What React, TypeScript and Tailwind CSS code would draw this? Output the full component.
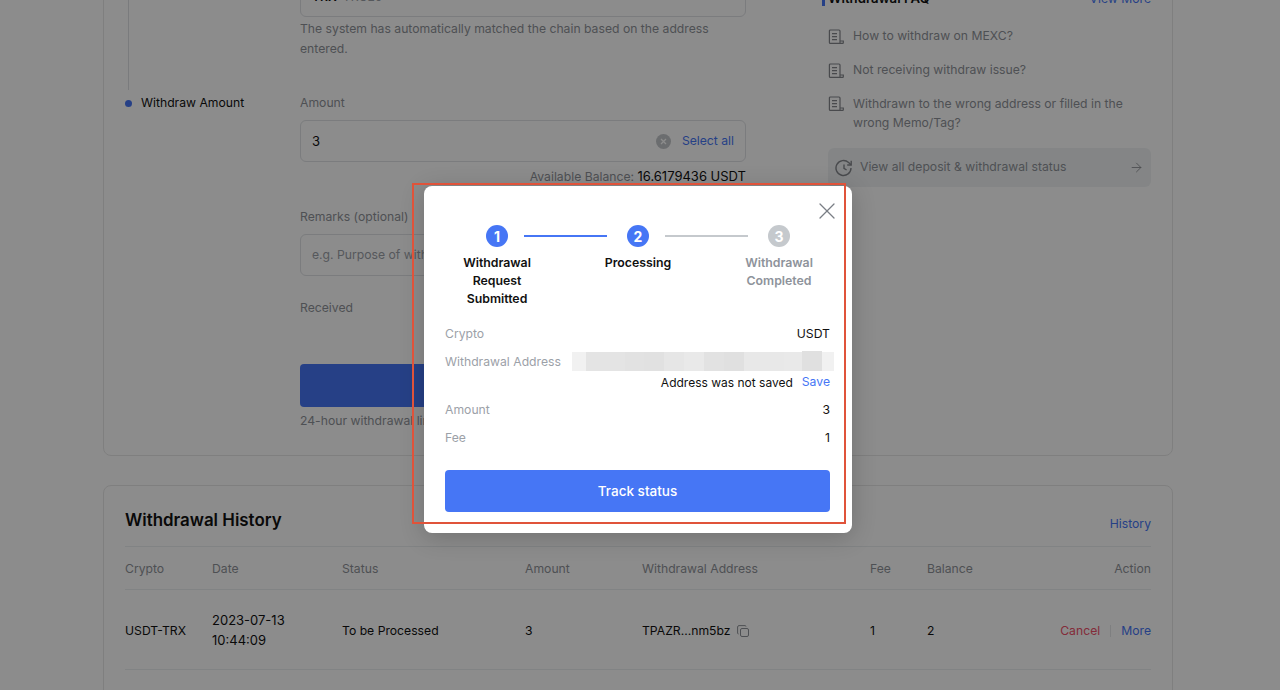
import { X, ArrowRight } from "lucide-react";

const font = { fontFamily: "Inter, 'Liberation Sans', sans-serif" };

function DocIcon() {
  return (
    <svg width="16" height="16" viewBox="0 0 16 16" fill="none" stroke="#85888d" strokeWidth="1.2" className="mt-[2px] shrink-0">
      <path d="M12 14.4H2.4a1 1 0 0 1-1-1V2a1 1 0 0 1 1-1h8.6a1 1 0 0 1 1 1v11.4a1 1 0 0 0 1 1h1.6a.7.7 0 0 0 .7-.7V12H12" />
      <path d="M4 4.6h5M4 7.6h5M4 10.6h5" />
    </svg>
  );
}

function HistoryIcon() {
  return (
    <svg width="18" height="18" viewBox="0 0 18 18" fill="none" stroke="#85888d" strokeWidth="1.4" className="shrink-0">
      <path d="M16 9a7.5 7.5 0 1 1-2.4-5.5L16 5.8" />
      <path d="M16.2 1.8v4.2h-4" />
      <path d="M9 5.4V9.4l2.6 1.6" />
    </svg>
  );
}

const blur: [number, string, boolean][] = [
  [14, "#f1f1f1", false],
  [39, "#e4e4e4", false],
  [19, "#e2e2e2", false],
  [20, "#e1e1e1", false],
  [20, "#e6e6e6", false],
  [20, "#e9e9e9", false],
  [20, "#e2e2e2", false],
  [20, "#e0e0e0", false],
  [40, "#e8e8e8", false],
  [18, "#e9e9e9", false],
  [20, "#e0e0e0", true],
  [12, "#f1f1f1", false],
];

function Step({ n, active, label }: { n: number; active: boolean; label: string }) {
  return (
    <div className="flex w-[100px] flex-col items-center">
      <div className={`flex h-[22px] w-[22px] items-center justify-center rounded-full text-[14px] font-bold text-white ${active ? "bg-[#4676f5]" : "bg-[#c5c9cd]"}`}>{n}</div>
      <div className={`mt-[7px] text-center text-[12.3px] font-semibold leading-[18px] ${active ? "text-[#111]" : "text-[#8e939b]"}`}>{label}</div>
    </div>
  );
}

function InfoRow({ label, value }: { label: string; value: string }) {
  return (
    <div className="flex h-[28.5px] items-center justify-between text-[12.2px]">
      <span className="text-[#9ca1a8]">{label}</span>
      <span className="text-[#111]">{value}</span>
    </div>
  );
}

const th = "pt-[3px] text-[12.2px] text-[#8f9399]";
const td = "pt-[3px] text-[12.2px] text-[#111]";

export default function App() {
  return (
    <div style={font} className="relative h-[690px] w-[1280px] overflow-hidden bg-white">
      <div className="ml-[103px] flex w-[1070px] flex-col">
        {/* Form card */}
        <div className="mt-[-102px] flex h-[558px] rounded-lg border border-[#e8e8e8] px-[21px]">
          {/* steps column */}
          <div className="flex w-[175px] shrink-0 flex-col">
            <div className="ml-[3px] h-[191px] w-px bg-[#dfe1e4]" />
            <div className="mt-[5px] flex items-center gap-[9px]">
              <span className="h-[7px] w-[7px] rounded-full bg-[#4676f5]" />
              <span className="text-[12.2px] leading-[16px] text-[#111]">Withdraw Amount</span>
            </div>
          </div>
          {/* form column */}
          <div className="flex w-[446px] shrink-0 flex-col text-[12.2px]">
            <div className="mt-[58px] flex h-[60px] items-end rounded-md border border-[#e0e2e5] px-[11px] pb-[10px]">
              <span className="font-semibold text-[#111]">TRX</span>
              <span className="ml-[6px] text-[#9ca1a8]">TRC20</span>
            </div>
            <p className="mt-[2px] leading-[19.5px] text-[#8f9399]">The system has automatically matched the chain based on the address entered.</p>
            <div className="mt-[35px] leading-[20px] text-[#8f9399]">Amount</div>
            <div className="mt-[7px] flex h-[42px] items-center justify-between rounded-md border border-[#e0e2e5] px-[11px] pt-[1px]">
              <span className="text-[13px] text-[#111]">3</span>
              <div className="flex items-center gap-[11px]">
                <svg width="15" height="15" viewBox="0 0 15 15"><circle cx="7.5" cy="7.5" r="7.5" fill="#c4c7ca" /><path d="M5 5l5 5M10 5l-5 5" stroke="#fff" strokeWidth="1.3" /></svg>
                <span className="text-[#4676f5]">Select all</span>
              </div>
            </div>
            <div className="mt-[5px] text-right leading-[18px] text-[#8f9399]">Available Balance: <span className="text-[13px] text-[#111]">16.6179436 USDT</span></div>
            <div className="mt-[21px] leading-[20px] text-[#8f9399]">Remarks (optional)</div>
            <div className="mt-[7px] flex h-[42px] items-center rounded-md border border-[#e0e2e5] px-[11px] pt-[1px] text-[#9ca1a8]">e.g. Purpose of withdrawal</div>
            <div className="mt-[22px] leading-[20px] text-[#8f9399]">Received</div>
            <div className="mt-[46px] h-[43px] rounded bg-[#4676f5]" />
            <div className="mt-[5px] leading-[18px] text-[#8f9399]">24-hour withdrawal limit</div>
          </div>
          {/* FAQ column */}
          <div className="ml-[82px] flex w-[323px] flex-col text-[12.2px]">
            <div className="mt-[91px] flex h-[18px] items-center justify-between">
              <div className="ml-[-6px] flex items-center gap-[3px]">
                <span className="h-[14px] w-[3px] bg-[#4676f5]" />
                <span className="text-[13.2px] font-semibold text-[#111]">Withdrawal FAQ</span>
              </div>
              <span className="text-[#4676f5]">View More</span>
            </div>
            <div className="mt-[18px] flex items-center gap-[9px] text-[#8f9399]"><DocIcon /><span className="leading-[20px]">How to withdraw on MEXC?</span></div>
            <div className="mt-[14px] flex items-center gap-[9px] text-[#8f9399]"><DocIcon /><span className="leading-[20px]">Not receiving withdraw issue?</span></div>
            <div className="mt-[14px] flex items-start gap-[9px] text-[#8f9399]"><DocIcon /><span className="leading-[19px]">Withdrawn to the wrong address or filled in the wrong Memo/Tag?</span></div>
            <div className="mt-[16px] flex h-[39px] items-center rounded-md bg-[#f1f3f5] px-[7px] text-[#8f9399]">
              <HistoryIcon />
              <span className="ml-[7px] flex-1">View all deposit &amp; withdrawal status</span>
              <ArrowRight size={15} strokeWidth={1.3} className="text-[#85888d]" />
            </div>
          </div>
        </div>

        {/* History card */}
        <div className="mt-[29px] h-[300px] shrink-0 rounded-lg border border-[#e8e8e8] px-[21px]">
          <div className="flex h-[60px] items-center justify-between">
            <span className="pt-[10px] text-[16.9px] font-semibold text-[#111]">Withdrawal History</span>
            <span className="pt-[16px] text-[12.2px] text-[#4676f5]">History</span>
          </div>
          <div className="grid h-[44px] grid-cols-[87px_130px_183px_117px_228px_57px_1fr_auto] items-center border-y border-[#eceef0]">
            <span className={th}>Crypto</span><span className={th}>Date</span><span className={th}>Status</span><span className={th}>Amount</span>
            <span className={th}>Withdrawal Address</span><span className={th}>Fee</span><span className={th}>Balance</span><span className={th}>Action</span>
          </div>
          <div className="grid h-[80px] grid-cols-[87px_130px_183px_117px_228px_57px_1fr_auto] items-center border-b border-[#eceef0]">
            <span className={td}>USDT-TRX</span>
            <span className="pt-[2px] text-[13px] leading-[19.5px] text-[#111]">2023-07-13<br />10:44:09</span>
            <span className={td}>To be Processed</span>
            <span className={td}>3</span>
            <span className={`${td} flex items-center gap-[6px]`}>TPAZR...nm5bz
              <svg width="12" height="12" viewBox="0 0 12 12" fill="none" stroke="#8f9399" strokeWidth="1"><rect x="3.5" y="3.5" width="8" height="8" rx="1.5" /><path d="M9 1.5A1 1 0 0 0 8 .6H2A1.5 1.5 0 0 0 .6 2v6a1 1 0 0 0 .9 1" /></svg>
            </span>
            <span className={td}>1</span>
            <span className={td}>2</span>
            <span className="flex items-center pt-[3px] text-[12.2px]">
              <span className="text-[#f0506a]">Cancel</span>
              <span className="mx-[10px] h-[12px] w-px bg-[#e5e7ea]" />
              <span className="text-[#4676f5]">More</span>
            </span>
          </div>
        </div>
      </div>

      {/* Dim overlay */}
      <div className="absolute inset-0 bg-black/45" />

      {/* Modal */}
      <div className="absolute left-[424px] top-[186px] h-[347px] w-[428px] rounded-lg bg-white pl-[21px] pr-[22px] shadow-[0_4px_24px_rgba(0,0,0,0.2)]">
        <button className="absolute right-[11px] top-[11px] text-[#7a7e85]"><X size={28} strokeWidth={1.1} /></button>
        <div className="ml-[-18.5px] mr-[-19.5px] mt-[39px] flex h-[90px] justify-between px-[20.5px]">
          <Step n={1} active label="Withdrawal Request Submitted" />
          <div className="ml-[-24px] mr-[-20px] mt-[10px] h-[2px] w-[83px] shrink-0 bg-[#4676f5]" />
          <Step n={2} active label="Processing" />
          <div className="ml-[-24px] mr-[-20px] mt-[10px] h-[2px] w-[83px] shrink-0 bg-[#c5c9cd]" />
          <Step n={3} active={false} label="Withdrawal Completed" />
        </div>
        <div className="mt-[5px]">
          <InfoRow label="Crypto" value="USDT" />
          <div className="flex h-[28px] items-center text-[12.2px]">
            <span className="w-[127px] shrink-0 text-[#9ca1a8]">Withdrawal Address</span>
            <div className="mb-[2px] mr-[-4px] flex h-[19px] flex-1 items-end">
              {blur.map(([w, c, tall], i) => (
                <span key={i} style={{ background: c, width: w, height: tall ? 20 : 19 }} className="shrink-0" />
              ))}
            </div>
          </div>
          <div className="flex h-[12px] items-center justify-end gap-[9px] text-[12.2px]">
            <span className="text-[12px] text-[#111]">Address was not saved</span>
            <span className="text-[#4676f5]">Save</span>
          </div>
          <div className="mt-[7px]">
            <InfoRow label="Amount" value="3" />
            <InfoRow label="Fee" value="1" />
          </div>
        </div>
        <div className="mt-[17px] flex h-[42px] items-center justify-center rounded bg-[#4676f5] pt-[1px] text-[13.5px] font-medium text-white">Track status</div>
      </div>

      {/* Annotation rectangle */}
      <div className="pointer-events-none absolute left-[412px] top-[183px] h-[341px] w-[434px] border-2 border-[#e0533a]" />
    </div>
  );
}
